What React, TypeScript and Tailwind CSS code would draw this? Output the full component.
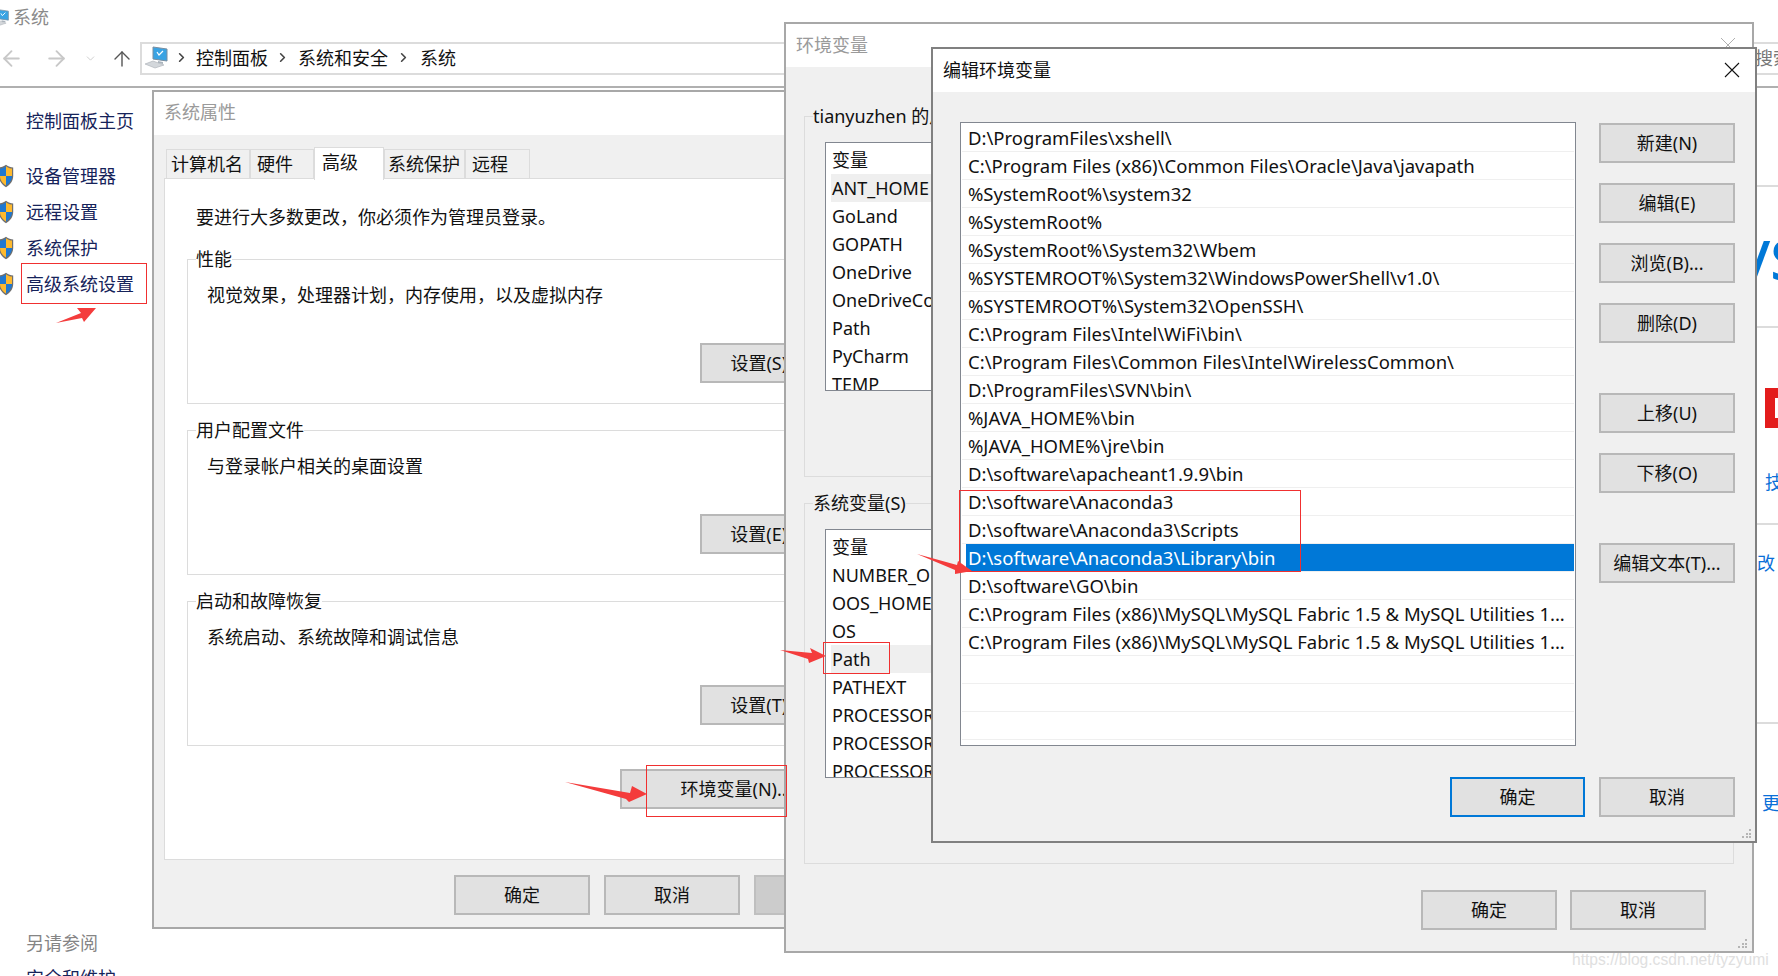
import React from "react";
import { ArrowLeft, ArrowRight, ArrowUp, ChevronDown, ChevronRight } from "lucide-react";
import { twMerge } from "tailwind-merge";

function Shield({ className = "" }: { className?: string }) {
  return (
    <svg viewBox="0 0 16 24" className={"w-[16px] h-[24px] shrink-0 " + className}>
      <path d="M8 0.8 C5.5 2.6 3.2 3.4 0.8 3.4 L0.8 12 C0.8 17 4 21 8 23.2 C12 21 15.2 17 15.2 12 L15.2 3.4 C12.8 3.4 10.5 2.6 8 0.8 Z" fill="#6f6f6f" />
      <path d="M8 2.2 C6 3.6 4 4.4 2 4.6 L2 12 L8 12 Z" fill="#1f78d1" />
      <path d="M8 2.2 C10 3.6 12 4.4 14 4.6 L14 12 L8 12 Z" fill="#fdb92e" />
      <path d="M2 12 C2 16 4.6 19.6 8 21.6 L8 12 Z" fill="#fdb92e" />
      <path d="M14 12 C14 16 11.4 19.6 8 21.6 L8 12 Z" fill="#1f78d1" />
    </svg>
  );
}

function Computer({ className = "" }: { className?: string }) {
  return (
    <svg viewBox="0 0 25 23" className={"w-[25px] h-[23px] shrink-0 " + className}>
      <path d="M9 1 L23 3 L23 15 L9 13 Z" fill="#3aa3e3" stroke="#7a8ea0" />
      <path d="M13 6 L15 9 L19 5" fill="none" stroke="#ffffff" strokeWidth="1.2" />
      <path d="M14 15 L19 16 L19 18 L14 17 Z" fill="#aab4bd" />
      <path d="M1 18 L9 15 L20 19 L11 22 Z" fill="#d3d7db" stroke="#a7adb3" strokeWidth="0.6" />
    </svg>
  );
}

function Grip({ className = "" }: { className?: string }) {
  return (
    <svg viewBox="0 0 10 10" className={"w-[10px] h-[10px] " + className} fill="#b5b5b5">
      <rect x="7" y="0" width="2" height="2" />
      <rect x="4" y="4" width="2" height="2" />
      <rect x="7" y="4" width="2" height="2" />
      <rect x="0" y="7" width="2" height="2" />
      <rect x="4" y="7" width="2" height="2" />
      <rect x="7" y="7" width="2" height="2" />
    </svg>
  );
}

function Btn({ children, className = "" }: { children: React.ReactNode; className?: string }) {
  return (
    <div className={twMerge("h-[40px] w-[136px] shrink-0 flex items-center justify-center whitespace-nowrap bg-[#e1e1e1] border-2 border-[#b8b8b8] text-[#111]", className)}>
      {children}
    </div>
  );
}

function Group({ title, children, className = "" }: { title: string; children: React.ReactNode; className?: string }) {
  return (
    <fieldset className={"border border-[#dcdcdc] min-w-0 " + className}>
      <legend className="ml-[8px] h-[28px] leading-[28px] whitespace-nowrap">{title}</legend>
      {children}
    </fieldset>
  );
}

function SettingGroup({ title, desc, button }: { title: string; desc: string; button: string }) {
  return (
    <Group title={title} className="h-[159px] w-[640px]">
      <div className="pl-[19px] pt-[8px]">
        <div className="h-[28px] whitespace-nowrap">{desc}</div>
        <Btn className="mt-[34px] ml-[493px] pr-[4px]">{button}</Btn>
      </div>
    </Group>
  );
}

function VarList({ rows, active }: { rows: string[]; active: string }) {
  return (
    <div className="h-[249px] w-[885px] ml-[20px] mt-[12px] bg-white border border-[#828790] px-[5px] pt-[3px] overflow-hidden">
      <div className="h-[28px] pl-[1px]">变量</div>
      {rows.map((r) => (
        <div key={r} className={r === active ? "h-[28px] pl-[1px] bg-[#efefef] whitespace-nowrap" : "h-[28px] pl-[1px] whitespace-nowrap"}>
          {r}
        </div>
      ))}
    </div>
  );
}

const tabs = [
  { t: "计算机名", c: "w-[84px] pl-[4px]" },
  { t: "硬件", c: "w-[64px] pl-[6px]" },
  { t: "高级", c: "w-[70px] pl-[7px]", active: true },
  { t: "系统保护", c: "w-[81px] pl-[3px]" },
  { t: "远程", c: "w-[65px] pl-[6px]" },
];

const paths = [
  "D:\\ProgramFiles\\xshell\\",
  "C:\\Program Files (x86)\\Common Files\\Oracle\\Java\\javapath",
  "%SystemRoot%\\system32",
  "%SystemRoot%",
  "%SystemRoot%\\System32\\Wbem",
  "%SYSTEMROOT%\\System32\\WindowsPowerShell\\v1.0\\",
  "%SYSTEMROOT%\\System32\\OpenSSH\\",
  "C:\\Program Files\\Intel\\WiFi\\bin\\",
  "C:\\Program Files\\Common Files\\Intel\\WirelessCommon\\",
  "D:\\ProgramFiles\\SVN\\bin\\",
  "%JAVA_HOME%\\bin",
  "%JAVA_HOME%\\jre\\bin",
  "D:\\software\\apacheant1.9.9\\bin",
  "D:\\software\\Anaconda3",
  "D:\\software\\Anaconda3\\Scripts",
  "D:\\software\\Anaconda3\\Library\\bin",
  "D:\\software\\GO\\bin",
  "C:\\Program Files (x86)\\MySQL\\MySQL Fabric 1.5 & MySQL Utilities 1...",
  "C:\\Program Files (x86)\\MySQL\\MySQL Fabric 1.5 & MySQL Utilities 1...",
  "",
  "",
  "",
];

export default function App() {
  return (
    <div className="relative w-[1778px] h-[976px] overflow-hidden bg-white text-[18px] leading-[28px] text-[#111] font-['Noto_Sans','Noto_Sans_CJK_SC',sans-serif]">
      {/* Explorer window behind the dialogs */}
      <div className="flex flex-col h-full">
        <div className="h-[34px] flex items-center text-[#8a8a8a]">
          <Computer className="-ml-[12px] scale-75" />
          <span>系统</span>
        </div>
        <div className="h-[54px] shrink-0 border-b-2 border-[#b0b0b0] flex items-start">
          <div className="flex items-center h-[33px] mt-[8px] w-[140px] shrink-0">
            <ArrowLeft size={25} strokeWidth={1.8} className="text-[#c8c8c8] -ml-[1px]" />
            <ArrowRight size={25} strokeWidth={1.8} className="text-[#c8c8c8] ml-[20px]" />
            <ChevronDown size={13} strokeWidth={1.6} className="text-[#c8c8c8] ml-[15px]" />
            <ArrowUp size={24} strokeWidth={1.4} className="text-[#555] ml-[13px]" />
          </div>
          <div className="flex-1 mt-[8px] h-[33px] border-2 border-[#dcdcdc] flex items-center pl-[2px] pb-[2px]">
            <Computer />
            <ChevronRight size={15} strokeWidth={2.6} className="text-[#444] ml-[5px]" />
            <span className="ml-[7px]">控制面板</span>
            <ChevronRight size={15} strokeWidth={2.6} className="text-[#444] ml-[7px]" />
            <span className="ml-[8px]">系统和安全</span>
            <ChevronRight size={15} strokeWidth={2.6} className="text-[#444] ml-[8px]" />
            <span className="ml-[9px]">系统</span>
          </div>
          <div className="w-[60px] ml-[8px] mt-[8px] h-[33px] border-y-2 border-l-2 border-[#dcdcdc] pl-[35px] overflow-hidden whitespace-nowrap text-[#777]">
            搜索
          </div>
        </div>
        <div className="flex-1 flex min-h-0">
          <div className="w-[152px] shrink-0 pt-[19px] pl-[26px] text-[#16235a] whitespace-nowrap">
            <div>控制面板主页</div>
            <div className="mt-[23px] -ml-[28px]">
              {["设备管理器", "远程设置", "系统保护", "高级系统设置"].map((s) => (
                <div key={s} className="h-[36px] flex items-center gap-[12px]">
                  <Shield />
                  <span>{s}</span>
                </div>
              ))}
            </div>
            <div className="mt-[627px] text-[#858585]">另请参阅</div>
            <div className="mt-[7px]">安全和维护</div>
          </div>
          <div className="flex-1" />
          <div className="w-[21px] shrink-0 overflow-hidden whitespace-nowrap text-[#0a6fd8]">
            <div className="h-[97px]" />
            <div className="h-[141px] border-t-2 border-[#dcdcdc] pt-[45px]">
              <span className="block -ml-[8px] text-[54px] leading-[54px] font-semibold text-[#0078d7]">/S</span>
            </div>
            <div className="h-[197px] border-t-2 border-[#dcdcdc] pt-[60px] pl-[8px]">
              <div className="h-[40px] w-[13px] bg-[#e31c1c] flex">
                <div className="ml-[10px] mt-[10px] w-[3px] h-[20px] bg-white" />
              </div>
              <div className="mt-[40px]">技</div>
            </div>
            <div className="h-[199px] border-t-2 border-[#dcdcdc] pt-[24px]">改</div>
            <div className="border-t-2 border-[#dcdcdc] pt-[65px] pl-[5px]">更</div>
          </div>
        </div>
      </div>

      {/* 系统属性 */}
      <div className="absolute left-[152px] top-[90px] w-[700px] h-[839px] border-2 border-[#a8a8a8] flex flex-col overflow-hidden bg-white">
        <div className="h-[43px] shrink-0 flex items-center pl-[10px] pb-[3px] text-[#9a9a9a]">系统属性</div>
        <div className="flex-1 bg-[#f0f0f0] pl-[10px] pt-[12px]">
          <div className="flex items-end h-[31px] ml-[2px]">
            {tabs.map((tab) =>
              tab.active ? (
                <div key={tab.t} className={"relative z-10 h-[33px] -mb-[2px] bg-white border-x border-t border-[#dcdcdc] " + tab.c}>
                  {tab.t}
                </div>
              ) : (
                <div key={tab.t} className={"h-[29px] bg-[#f0f0f0] border-x border-t border-[#dcdcdc] " + tab.c}>
                  {tab.t}
                </div>
              )
            )}
          </div>
          <div className="h-[682px] w-[700px] bg-white border border-[#dcdcdc] pt-[24px]">
            <div className="pl-[31px] h-[28px]">要进行大多数更改，你必须作为管理员登录。</div>
            <div className="ml-[22px] mt-[14px] flex flex-col gap-[12px]">
              <SettingGroup title="性能" desc="视觉效果，处理器计划，内存使用，以及虚拟内存" button="设置(S)..." />
              <SettingGroup title="用户配置文件" desc="与登录帐户相关的桌面设置" button="设置(E)..." />
              <SettingGroup title="启动和故障恢复" desc="系统启动、系统故障和调试信息" button="设置(T)..." />
            </div>
            <Btn className="mt-[23px] ml-[455px] w-[236px] pr-[4px]">环境变量(N)...</Btn>
          </div>
          <div className="flex gap-[14px] mt-[15px] ml-[290px]">
            <Btn>确定</Btn>
            <Btn>取消</Btn>
            <Btn className="bg-[#cccccc] border-[#bfbfbf] text-[#888]">应用(A)</Btn>
          </div>
        </div>
      </div>

      {/* 环境变量 */}
      <div className="absolute left-[784px] top-[22px] w-[970px] h-[931px] border-2 border-[#a8a8a8] flex flex-col overflow-hidden bg-white">
        <div className="h-[43px] shrink-0 flex items-center justify-between pl-[10px] pr-[16px] pb-[1px] text-[#9a9a9a]">
          <span>环境变量</span>
          <svg viewBox="0 0 16 16" className="w-[16px] h-[16px]" stroke="#b0b0b0" strokeWidth="1">
            <path d="M1 1 L15 15 M15 1 L1 15" />
          </svg>
        </div>
        <div className="relative flex-1 bg-[#f0f0f0] pl-[18px] pt-[35px]">
          <Group title="tianyuzhen 的用户变量(U)" className="w-[930px] h-[375px]">
            <VarList active="ANT_HOME" rows={["ANT_HOME", "GoLand", "GOPATH", "OneDrive", "OneDriveConsumer", "Path", "PyCharm", "TEMP"]} />
          </Group>
          <Group title="系统变量(S)" className="w-[930px] h-[375px] mt-[12px]">
            <VarList active="Path" rows={["NUMBER_OF_PROCESSORS", "OOS_HOME", "OS", "Path", "PATHEXT", "PROCESSOR_ARCHITECTURE", "PROCESSOR_IDENTIFIER", "PROCESSOR_LEVEL"]} />
          </Group>
          <div className="flex justify-end gap-[13px] mt-[26px] pr-[46px]">
            <Btn>确定</Btn>
            <Btn>取消</Btn>
          </div>
          <Grip className="absolute right-[4px] bottom-[2px]" />
        </div>
      </div>

      {/* 编辑环境变量 */}
      <div className="absolute left-[931px] top-[47px] w-[826px] h-[796px] border-2 border-[#808080] flex flex-col overflow-hidden bg-white">
        <div className="h-[43px] shrink-0 flex items-center justify-between pl-[10px] pr-[15px] pb-[2px]">
          <span>编辑环境变量</span>
          <svg viewBox="0 0 16 16" className="w-[16px] h-[16px]" stroke="#111" strokeWidth="1.1">
            <path d="M1 1 L15 15 M15 1 L1 15" />
          </svg>
        </div>
        <div className="relative flex-1 bg-[#f0f0f0] pl-[27px] pt-[30px]">
          <div className="flex h-[624px]">
            <div className="w-[616px] h-full bg-white border border-[#828790] pt-[1px] overflow-hidden text-[18.5px]">
              {paths.map((p, i) => (
                <div key={i} className="h-[28px] mx-[1px] border-b border-[#efefef] whitespace-nowrap">
                  <div className={i === 15 ? "h-[27px] ml-[4px] pl-[2px] bg-[#0078d7] text-white" : "h-[27px] ml-[4px] pl-[2px]"}>{p}</div>
                </div>
              ))}
            </div>
            <div className="ml-[23px] mt-[1px] flex flex-col">
              <Btn>新建(N)</Btn>
              <Btn className="mt-[20px]">编辑(E)</Btn>
              <Btn className="mt-[20px]">浏览(B)...</Btn>
              <Btn className="mt-[20px]">删除(D)</Btn>
              <Btn className="mt-[50px]">上移(U)</Btn>
              <Btn className="mt-[20px]">下移(O)</Btn>
              <Btn className="mt-[50px]">编辑文本(T)...</Btn>
            </div>
          </div>
          <div className="flex justify-end gap-[14px] mt-[31px] pr-[20px]">
            <Btn className="w-[135px] border-[#0078d7]">确定</Btn>
            <Btn>取消</Btn>
          </div>
          <Grip className="absolute right-[3px] bottom-[2px]" />
        </div>
      </div>

      {/* Red annotations on top of the screenshot */}
      <div className="absolute left-[21px] top-[263px] w-[126px] h-[41px] border border-[#f03030]" />
      <div className="absolute left-[646px] top-[765px] w-[141px] h-[52px] border border-[#f03030]" />
      <div className="absolute left-[823px] top-[642px] w-[67px] h-[32px] border border-[#f03030]" />
      <div className="absolute left-[959px] top-[490px] w-[342px] h-[82px] border border-[#f03030]" />
      <svg className="absolute left-0 top-0 w-[1778px] h-[976px] pointer-events-none" viewBox="0 0 1778 976" fill="#f43c3c">
        <polygon points="56,323 81,313 77,308 96,308 84,322 82,318" />
        <polygon points="565,782 630,793 632,786 647,794 629,802 626,799" />
        <polygon points="780,650 812,653 810,648 826,656 809,663 808,659" />
        <polygon points="917,554 957,565 958,561 972,571 955,574 955,570" />
      </svg>

      <div className="absolute left-[1572px] top-[946px] text-[15.6px] text-[#e0e0e0] whitespace-nowrap font-['Liberation_Sans',sans-serif]">https://blog.csdn.net/tyzyumi</div>
    </div>
  );
}
